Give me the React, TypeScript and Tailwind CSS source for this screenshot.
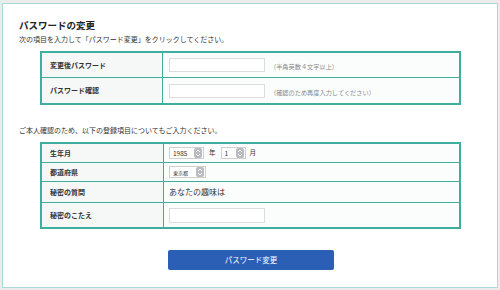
import React from "react";

const jp = { fontFamily: '"Noto Sans CJK JP", "Noto Sans", sans-serif' };

function Spin() {
  return (
    <span className="flex h-[10px] w-[8px] flex-col items-center justify-center rounded-[2px] bg-[#b8bcc0]">
      <svg width="6" height="8" viewBox="0 0 6 8">
        <path d="M1 3 L3 1 L5 3" fill="none" stroke="#fff" strokeWidth="1" />
        <path d="M1 5 L3 7 L5 5" fill="none" stroke="#fff" strokeWidth="1" />
      </svg>
    </span>
  );
}

function Sel({ text, w, fs }: { text: string; w: string; fs: string }) {
  return (
    <span className={`flex h-[12px] items-center justify-between border border-[#cfcfcf] bg-white pl-[3px] pr-[1px] ${w}`}>
      <span className={`${fs} leading-none text-[#333]`}>{text}</span>
      <Spin />
    </span>
  );
}

export default function App() {
  return (
    <div className="h-[290px] w-[500px] bg-[#ececec] pl-[2px] pt-[3px]" style={jp}>
      <div className="h-[285px] w-[496px] border border-[#a9d9d9] bg-white">
        <div className="pl-[16px] pt-[15px] text-[9.5px] font-bold leading-[12px] text-[#222]">パスワードの変更</div>
        <div className="pl-[16px] pt-[3px] text-[7px] leading-[10px] text-[#333]">
          次の項目を入力して「パスワード変更」をクリックしてください。
        </div>

        <div className="ml-[37px] mt-[7px] w-[421px] border-2 border-[#3fae9f]">
          <div className="flex h-[25px] border-b border-[#3fae9f]">
            <div className="flex w-[121px] items-center border-r border-[#3fae9f] bg-[#f6f8f8] pl-[8px] text-[7px] font-bold text-[#333]">変更後パスワード</div>
            <div className="flex flex-1 items-center bg-[#fbfdfd] pl-[6px]">
              <span className="h-[14px] w-[96px] border border-[#dcdcdc] bg-white" />
              <span className="ml-[5px] mt-[4px] text-[6.2px] text-[#888]">（半角英数４文字以上）</span>
            </div>
          </div>
          <div className="flex h-[25px]">
            <div className="flex w-[121px] items-center border-r border-[#3fae9f] bg-[#f6f8f8] pl-[8px] text-[7px] font-bold text-[#333]">パスワード確認</div>
            <div className="flex flex-1 items-center bg-[#fbfdfd] pl-[6px]">
              <span className="h-[14px] w-[96px] border border-[#dcdcdc] bg-white" />
              <span className="ml-[5px] mt-[4px] text-[6.2px] text-[#888]">（確認のため再度入力してください）</span>
            </div>
          </div>
        </div>

        <div className="pl-[16px] pt-[20px] text-[7px] leading-[10px] text-[#333]">
          ご本人確認のため、以下の登録項目についてもご入力ください。
        </div>

        <div className="ml-[37px] mt-[7px] w-[421px] border-2 border-[#3fae9f]">
          <div className="flex h-[19px] border-b border-[#3fae9f]">
            <div className="flex w-[122px] items-center border-r border-[#3fae9f] bg-[#f6f8f8] pl-[8px] text-[7px] font-bold text-[#333]">生年月</div>
            <div className="flex flex-1 items-center bg-[#fbfdfd] pl-[5px]">
              <Sel text="1985" w="w-[35px]" fs="text-[6.5px]" />
              <span className="ml-[5px] text-[6.5px] text-[#333]">年</span>
              <span className="ml-[5px]"><Sel text="1" w="w-[25px]" fs="text-[6.5px]" /></span>
              <span className="ml-[4px] text-[6.5px] text-[#333]">月</span>
            </div>
          </div>
          <div className="flex h-[19px] border-b border-[#3fae9f]">
            <div className="flex w-[122px] items-center border-r border-[#3fae9f] bg-[#f6f8f8] pl-[8px] text-[7px] font-bold text-[#333]">都道府県</div>
            <div className="flex flex-1 items-center bg-[#fbfdfd] pl-[5px]">
              <Sel text="東京都" w="w-[37px]" fs="text-[5px]" />
            </div>
          </div>
          <div className="flex h-[21px] border-b border-[#3fae9f]">
            <div className="flex w-[122px] items-center border-r border-[#3fae9f] bg-[#f6f8f8] pl-[8px] text-[7px] font-bold text-[#333]">秘密の質問</div>
            <div className="flex flex-1 items-center bg-[#fbfdfd] pl-[5px] text-[8px] text-[#333]">あなたの趣味は</div>
          </div>
          <div className="flex h-[24px]">
            <div className="flex w-[122px] items-center border-r border-[#3fae9f] bg-[#f6f8f8] pl-[8px] text-[7px] font-bold text-[#333]">秘密のこたえ</div>
            <div className="flex flex-1 items-center bg-[#fbfdfd] pl-[5px]">
              <span className="h-[15px] w-[96px] border border-[#dcdcdc] bg-white" />
            </div>
          </div>
        </div>

        <div className="flex justify-center pl-[2px] pt-[21px]">
          <div className="flex h-[20px] w-[166px] items-center justify-center rounded-[2px] bg-[#2a5fb5] text-[7.5px] text-white">
            パスワード変更
          </div>
        </div>
      </div>
    </div>
  );
}
